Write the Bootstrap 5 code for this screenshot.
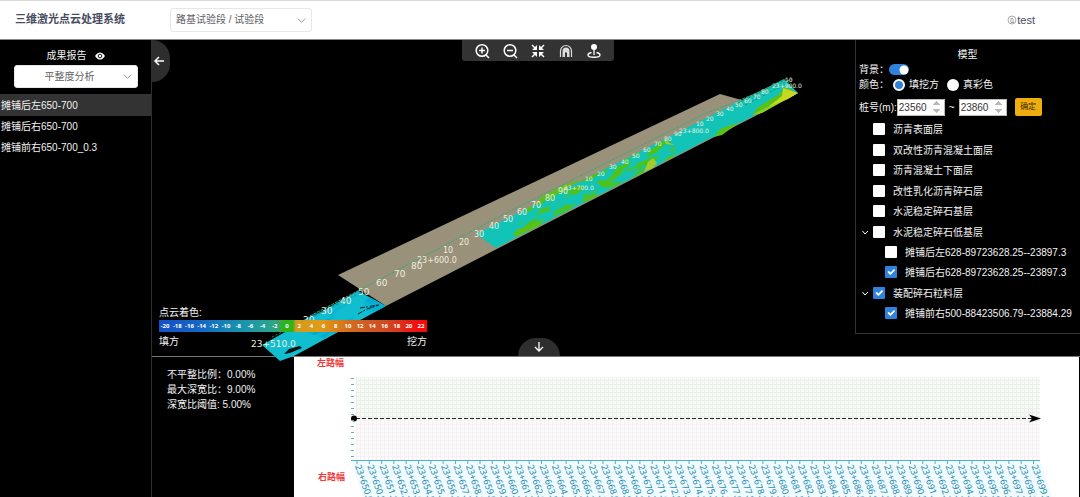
<!DOCTYPE html>
<html lang="zh-CN">
<head>
<meta charset="utf-8">
<meta name="viewport" content="width=device-width, initial-scale=1">
<title>三维激光点云处理系统</title>
<link href="https://cdn.jsdelivr.net/npm/bootstrap@5.3.0/dist/css/bootstrap.min.css" rel="stylesheet">
<style>
  body { font-family: "Liberation Sans", "Noto Sans CJK SC", sans-serif; font-size: 10px; line-height: 15px; background: #000; color: #f2f2f2; }
  .topbar { height: 40px; padding-left: 15px; padding-right: 45px; border-top: 1px solid #d9d9d9; border-bottom: 1px solid #8a8a8a; background: #fff; color: #474c61; font-size: 11px; }
  .brand { width: 155px; font-size: 11px; font-weight: 700; color: #474c61; }
  .pick { font-size: 10px; line-height: 14px; color: #606266; background-color: #fff; border: 1px solid #e4e7ed; border-radius: 3px; padding: 3px 22px 3px 5px; background-size: 9px 9px; background-position: right 5px center;
    background-image: url("data:image/svg+xml,%3csvg xmlns='http://www.w3.org/2000/svg' viewBox='0 0 10 10'%3e%3cpath fill='none' stroke='%23888' d='M1 3l4 4 4-4'/%3e%3c/svg%3e"); }
  .pick-project { width: 142px; height: 24px; }
  .pick-report { width: 124px; height: 23px; padding-left: 10px; text-align: center; margin: 2px 0 6px; }
  .side { width: 152px; border-right: 1px solid #2e2e2e; }
  .side .entry { height: 21px; padding: 0 1px; border: 0; background: transparent; color: #f2f2f2; text-align: left; }
  .side .entry.active { background: #333; height: 22px; }
  .scene { min-height: 0; }
  .model { left: 0; bottom: 0; height: 100%; overflow: visible; }
  .tab-left { left: 0; top: 0; width: 18px; height: 42px; border-radius: 0 21px 21px 0; background: #2e2e2e; }
  .tab-down { left: 366px; bottom: 0; width: 42px; height: 18px; border-radius: 21px 21px 0 0; background: #2e2e2e; }
  .tools { left: 310px; top: 0; width: 152px; height: 21px; padding: 0 12px; background: #333; border-radius: 0 0 3px 3px; }
  .plain { border: 0; padding: 0; color: #f2f2f2; }
  .legend { left: 7px; bottom: 7px; width: 268px; }
  .legend .heading { line-height: 14px; }
  .legend .ends { padding-top: 2px; }
  .ramp { height: 12px; font-family: "Noto Sans", sans-serif; font-size: 6px; font-weight: 700; line-height: 12px; color: #fff;
    background: linear-gradient(90deg, #1450c8 0%, #1466c4 15%, #1891b0 30%, #27a391 41%, #3aa26a 45%, #2eb41a 46%, #2eb41a 50%, #d29a1c 51%, #e09a18 60%, #d2691e 72%, #cd4a22 85%, #f01010 96%, #f80808 100%); }
  .panel { right: 0; top: 0; width: 225px; height: 294px; padding: 7px 4px 0 3px; border: 1px solid #333; border-width: 0 0 1px 1px; background: #000; }
  .panel .form-check-input { margin: 0; border: 0; border-radius: 1px; width: 12px; height: 12px; background-color: #fff; flex: none; }
  .panel .form-check-input:checked { background-color: #2f83dc; }
  .panel .form-check-input.round { border-radius: 50%; }
  .panel .form-check-input.round:checked { background-color: #2f83dc; border: 2px solid #fff; background-image: none; }
  .panel .form-check-input.toggle { width: 20px; height: 11px; border-radius: 6px; background-size: 10px 10px; background-position: right center;
    background-image: url("data:image/svg+xml,%3csvg xmlns='http://www.w3.org/2000/svg' viewBox='-4 -4 8 8'%3e%3ccircle r='3.6' fill='%23fff'/%3e%3c/svg%3e"); }
  .stakes { margin-top: 6px; }
  .stake { width: 48px; height: 17px; padding: 0 0 0 1px; border: 1px solid #bbb; font-size: 10px; background: #fff; color: #333; }
  .stake::-webkit-inner-spin-button { opacity: .6; height: 14px; }
  .ok { width: 27px; height: 18px; padding: 0; font-size: 8px; line-height: 16px; color: #3b2b00; background: #eeae10; border-radius: 2px; }
  .tree { padding: 3px 0 0 2px; }
  .tree .node { height: 20px; gap: 8px; white-space: nowrap; }
  .tree > li:nth-child(even), .tree > li:last-child { margin-top: 1px; }
  .tree .arrow { width: 8px; height: 20px; margin-right: -4px; flex: none; }
  .tree ul { padding-left: 12px; }
  .stats { width: 142px; padding: 10px 0 0 15px; }
  .bottom { height: 141px; border-top: 1px solid #777; }
  .profile { background: #fff; margin-right: 1px; }
  .tick { font-family: "Noto Sans", sans-serif; font-size: 9px; fill: #2088ad; }
  .km { font-family: "DejaVu Sans", sans-serif; font-size: 8px; fill: #eeeedd; }
  .km .big { font-size: 9px; }
  .km .far { font-size: 6px; }
</style>
</head>
<body class="vh-100 d-flex flex-column overflow-hidden">
<header class="topbar d-flex align-items-center flex-shrink-0">
  <h1 class="brand mb-0">三维激光点云处理系统</h1>
  <select class="form-select pick pick-project" aria-label="试验段"><option>路基试验段 / 试验段</option></select>
  <a href="#" class="ms-auto d-flex align-items-center text-reset text-decoration-none">
    <svg width="10" height="10" viewBox="0 0 10 10" fill="none" stroke="#aaa"><circle cx="5" cy="5" r="4"/><path d="M4 3.500h2v4M4 7.500h3M4 3v4"/></svg>test</a>
</header>

<div class="d-flex flex-grow-1 overflow-hidden">
  <aside class="side d-flex flex-column flex-shrink-0">
    <div class="d-flex justify-content-center align-items-center gap-2 pt-2">成果报告
      <svg width="10" height="8" viewBox="0 0 10 8"><path fill="#fff" d="M0 4C2 1 3.500 .500 5 .500S8 1 10 4C8 7 6.500 7.500 5 7.500S2 7 0 4z"/><circle cx="5" cy="4" r="1.800" fill="none" stroke="#111"/></svg>
    </div>
    <select class="form-select pick pick-report align-self-center" aria-label="成果报告"><option>平整度分析</option></select>
    <button class="entry active">摊铺后左650-700</button>
    <button class="entry">摊铺后右650-700</button>
    <button class="entry">摊铺前右650-700_0.3</button>
  </aside>

  <main class="flex-grow-1 d-flex flex-column overflow-hidden">
    <section class="scene position-relative flex-grow-1">
      <svg class="model position-absolute" width="704" viewBox="152 40 704 316" preserveAspectRatio="xMinYMax meet" role="img" aria-label="点云模型">
        <defs>
          <filter id="patches" x="0" y="0" width="1" height="1" color-interpolation-filters="sRGB">
            <feTurbulence type="fractalNoise" baseFrequency=".06 .17" numOctaves="4" seed="8"/>
            <feColorMatrix values="0 0 0 0 .3  0 0 0 0 .76  0 0 0 0 .1  0 10 0 0 -4.900"/>
            <feComposite in2="SourceGraphic" operator="in"/>
          </filter>
          <filter id="ripple" x="0" y="0" width="1" height="1" color-interpolation-filters="sRGB">
            <feTurbulence type="fractalNoise" baseFrequency=".03 .15" numOctaves="2" seed="3"/>
            <feColorMatrix values="0 0 0 0 0  0 0 0 0 .66  0 0 0 0 .82  0 5 0 0 -2.400"/>
            <feComposite in2="SourceGraphic" operator="in"/>
          </filter>
          <clipPath id="strip"><path d="M476 234l260-131 48-24 14 14-302 155z"/></clipPath>
          <clipPath id="tail"><path d="M290 327l68-36 28 15-60 33z"/></clipPath>
        </defs>
        <path fill="#9a917a" d="M338 275L720 94l25 7 20 10L386 306z"/>
        <path fill="#10bed0" d="M262 345l96-54 28 15-92 50-14 5z"/>
        <g clip-path="url(#tail)"><g transform="rotate(-28 290 327)"><path filter="url(#ripple)" fill="#fff" d="M280 310h120v60H280z"/></g></g>
        <path fill="#12c4b8" d="M476 234l260-131 48-24 14 14-302 155z"/>
        <g clip-path="url(#strip)"><g transform="rotate(-27 540 205)"><path filter="url(#patches)" fill="#fff" d="M530 192h155v38H500z"/></g></g>
        <path fill="#5cc01c" d="M518 229l12-4 16-7-8 8-20 10-6-1zM720 129l20-7-18 13-8 2zM538 199l24-13 20-7-26 16-14 6z"/>
        <path fill="#8cd020" d="M768 103l17-9 13-1-36 20-10 2z"/>
        <path fill="#5cc01c" d="M758 107l20-12 8-8 8 4-18 12-24 12z"/>
        <path fill="#c8d820" d="M783 88l15 5-10 6-20 8 14-11z"/>
        <path fill="#a4cc28" d="M648 162l5-4 4 5-4 5-9 4 2-5zM664 140l10 5-8-1z"/>
        <path fill="none" stroke="#3ea878" stroke-dasharray="3 1" d="M310 316l210-110 182-91 90-36"/>
        <path fill="none" stroke="#248a62" stroke-dasharray="2 2" d="M272 337l88-44M738 103l50-25M745 105l47-24"/>
        <path fill="#031010" d="M284 354l5-5 11-3 2 2-12 5z"/>
        <path fill="none" stroke="#042020" stroke-dasharray="5 1 2 2" d="M358 314l9-5 12-4M360 308l18-3"/>
        <g class="km">
          <g class="big"><text x="251" y="347">23+510.0</text><text x="303" y="323">20</text><text x="321" y="314">30</text><text x="340" y="304">40</text><text x="358" y="295">50</text><text x="376" y="286">60</text><text x="394" y="277">70</text><text x="411" y="269">80</text></g>
          <text x="417" y="263">23+600.0</text><text x="443" y="253">10</text><text x="459" y="245">20</text><text x="474" y="237">30</text><text x="489" y="229">40</text><text x="503" y="222">50</text><text x="517" y="215">60</text><text x="531" y="208">70</text><text x="545" y="201">80</text><text x="558" y="194">90</text>
          <g class="far"><text x="564" y="190">23+700.0</text><text x="585" y="181">10</text><text x="597" y="176">20</text><text x="609" y="169">30</text><text x="621" y="164">40</text><text x="632" y="158">50</text><text x="643" y="152">60</text><text x="654" y="146">70</text><text x="664" y="141">80</text><text x="674" y="136">90</text><text x="679" y="133">23+800.0</text><text x="696" y="126">10</text><text x="706" y="121">20</text><text x="716" y="116">30</text><text x="726" y="111">40</text><text x="735" y="107">50</text><text x="744" y="103">60</text><text x="753" y="99">70</text><text x="761" y="94">80</text><text x="772" y="88">23+900.0</text><text x="785" y="82">10</text></g>
        </g>
      </svg>

      <button class="tab-left plain position-absolute d-flex align-items-center" aria-label="收起"><svg width="16" height="14" viewBox="0 0 16 14" fill="none" stroke="#fff" stroke-width="1.500"><path d="M12 7H3M7 3L3 7l4 4"/></svg></button>

      <div class="tools position-absolute d-flex justify-content-between align-items-center">
        <button class="btn plain d-flex" aria-label="放大"><svg width="16" height="16" viewBox="0 0 16 16" fill="none" stroke="#fff" stroke-width="1.500"><circle cx="8" cy="7.500" r="5.800"/><path d="M12 12l3 3M5 7.500h6M8 4.500v6"/></svg></button>
        <button class="btn plain d-flex" aria-label="缩小"><svg width="16" height="16" viewBox="0 0 16 16" fill="none" stroke="#fff" stroke-width="1.500"><circle cx="8" cy="7.500" r="5.800"/><path d="M12 12l3 3M5 7.500h6"/></svg></button>
        <button class="btn plain d-flex" aria-label="适应窗口"><svg width="16" height="16" viewBox="0 0 16 16" fill="#fff" stroke="#fff" stroke-width="1.500"><path d="M2 2l4 4M14 2l-4 4M2 14l4-4M14 14l-4-4"/><path stroke="none" d="M7 2v5H2zM9 2v5h5zM7 14V9H2zM9 14V9h5z"/></svg></button>
        <button class="btn plain d-flex" aria-label="隧道"><svg width="16" height="16" viewBox="0 0 16 16" fill="none" stroke="#ddd" stroke-width="1.200"><path d="M2.500 14V8a5.500 5.500 0 0 1 11 0v6"/><path fill="#ddd" stroke="none" d="M4.500 14V8a3.500 3.500 0 0 1 7 0v6H9V9.500H7V14z"/></svg></button>
        <button class="btn plain d-flex" aria-label="定位"><svg width="16" height="16" viewBox="0 0 16 16" fill="none" stroke="#fff" stroke-width="1.300"><circle cx="8" cy="4" r="3" fill="#fff" stroke="none"/><path d="M8 5v7M5.500 9.500C3 10 2 11 2 12c0 3 12 3 12 0 0-1-1-2-3.500-2.500"/></svg></button>
      </div>

      <div class="legend position-absolute">
        <div class="heading">点云着色:</div>
        <div class="ramp d-flex text-center" id="ramp"></div>
        <div class="ends d-flex justify-content-between"><span>填方</span><span>挖方</span></div>
      </div>

      <button class="tab-down plain position-absolute d-flex justify-content-center align-items-center" aria-label="收起"><svg width="14" height="14" viewBox="0 0 14 14" fill="none" stroke="#fff" stroke-width="1.300"><path d="M7 2v9M3 7l4 4 4-4"/></svg></button>

      <form class="panel position-absolute">
        <div class="text-center">模型</div>
        <div class="d-flex align-items-center"><label for="bg">背景：</label><input class="form-check-input toggle" type="checkbox" role="switch" id="bg" checked></div>
        <div class="d-flex align-items-center"><span>颜色：</span>
          <input class="form-check-input round ms-1 me-1" type="radio" name="colour" id="c1" checked><label for="c1">填挖方</label>
          <input class="form-check-input round ms-2 me-1" type="radio" name="colour" id="c2"><label for="c2">真彩色</label></div>
        <div class="stakes d-flex align-items-center"><label for="from">桩号(m):</label><input class="stake" type="number" id="from" value="23560"><span class="px-1">~</span><input class="stake" type="number" id="to" value="23860" aria-label="终点桩号"><button type="button" class="btn ok ms-2">确定</button></div>
        <ul class="tree list-unstyled mb-0" id="tree"></ul>
      </form>
    </section>

    <section class="bottom d-flex flex-shrink-0">
      <div class="stats flex-shrink-0">
        <div>不平整比例：0.00%</div><div>最大深宽比：9.00%</div><div>深宽比阈值: 5.00%</div>
      </div>
      <div class="profile flex-grow-1 overflow-hidden">
        <svg class="d-block w-100" viewBox="294 357 785 140" role="img" aria-label="平整度剖面">
          <defs>
            <pattern id="gridTop" width="4" height="4" patternUnits="userSpaceOnUse"><path d="M0 .5h4M.5 0v4" stroke="#e8f0e7" fill="none"/></pattern>
            <pattern id="gridLow" width="4" height="4" patternUnits="userSpaceOnUse"><path d="M0 .5h4M.5 0v4" stroke="#f4f1f2" fill="none"/></pattern>
          </defs>
          <g font-size="9" font-weight="700" fill="#f03a3a"><text x="317" y="366">左路幅</text><text x="318" y="480">右路幅</text></g>
          <path fill="#f7fbf6" d="M356 377h684v42H356z"/><path fill="url(#gridTop)" d="M356 377h684v42H356z"/>
          <path fill="#fcfafa" d="M356 419h684v41H356z"/><path fill="url(#gridLow)" d="M356 419h684v41H356z"/>
          <path fill="#f0fbff" d="M351 461h689l12 36H363z"/>
          <path stroke="#53afc4" d="M351 460.500h689"/>
          <path stroke="#222" stroke-dasharray="4 2" d="M356 418.500h676"/>
          <circle cx="354" cy="418.500" r="3"/>
          <path d="M1041 418.500l-12-4 3 4-3 4z"/>
          <g id="axis"></g>
        </svg>
      </div>
    </section>
  </main>
</div>

<script src="https://cdn.jsdelivr.net/npm/bootstrap@5.3.0/dist/js/bootstrap.bundle.min.js"></script>
<script>
  // Colour ramp values from fill to cut
  let ramp = '';
  for (let v = -20; v <= 22; v += 2) ramp += `<span class="flex-fill" style="width:${100 / 22}%">${v}</span>`;
  document.getElementById('ramp').innerHTML = ramp;

  // Pavement layers
  const layers = [
    ['沥青表面层'], ['双改性沥青混凝土面层'], ['沥青混凝土下面层'], ['改性乳化沥青碎石层'], ['水泥稳定碎石基层'],
    ['水泥稳定碎石低基层', false, [['摊铺后左628-89723628.25--23897.3'], ['摊铺后右628-89723628.25--23897.3', true]]],
    ['装配碎石粒料层', true, [['摊铺前右500-88423506.79--23884.29', true]]]
  ];
  let id = 0;
  const row = ([name, on, kids]) => {
    const key = 'n' + id++;
    return `<li><div class="node d-flex align-items-center"><svg class="arrow" viewBox="0 0 8 20">${kids ? '<path d="M1.500 9L4 12l3-3" fill="none" stroke="#fff"/>' : ''}</svg>` +
      `<input class="form-check-input" type="checkbox" id="${key}"${on ? ' checked' : ''}><label for="${key}">${name}</label></div>` +
      (kids ? `<ul class="list-unstyled">${kids.map(row).join('')}</ul>` : '') + '</li>';
  };
  document.getElementById('tree').innerHTML = layers.map(row).join('');

  // Stake numbers along the profile, one every 0.9 m
  let axis = '';
  for (let i = 0; i < 56; i++) {
    const x = 357 + i * 12.3;
    axis += `<path stroke="#53afc4" d="M${x} 461v3"/><text class="tick" transform="translate(${x - 2} 466) rotate(71)">23+${(650 + i * 0.9).toFixed(1)}</text>`;
  }
  for (let y = 378; y < 460; y += 6) axis += `<path stroke="#5bb5a8" d="M351 ${y}.5h3"/>`;
  document.getElementById('axis').innerHTML = axis;
</script>
</body>
</html>
